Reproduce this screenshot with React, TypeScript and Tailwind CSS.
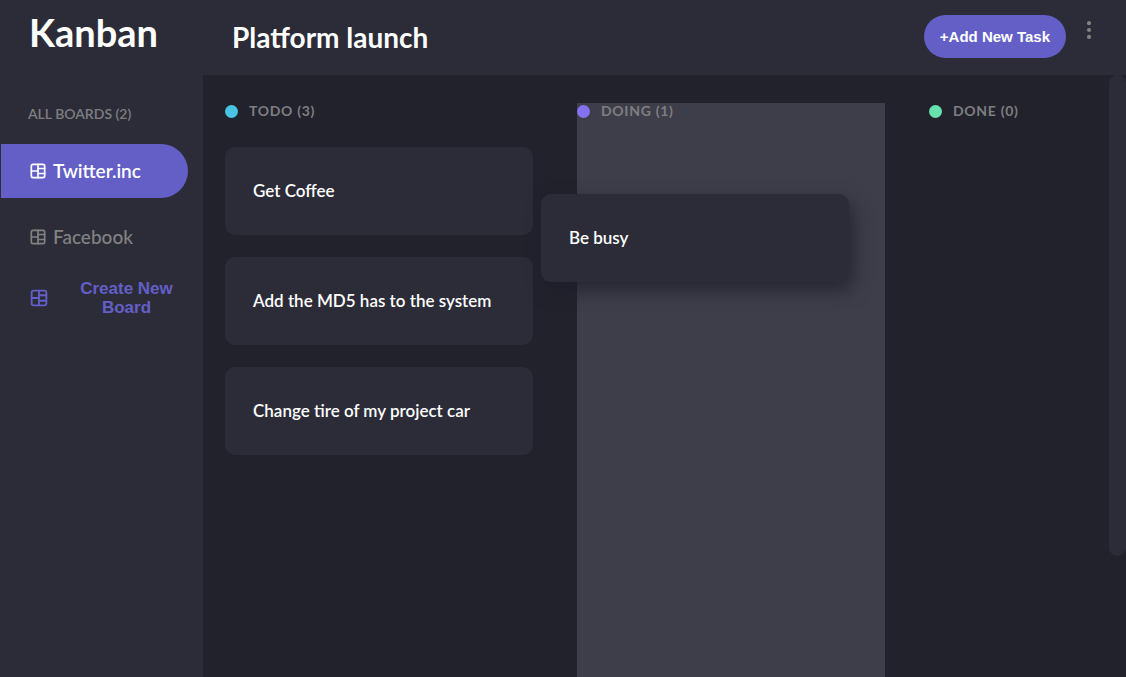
import { TbLayoutBoardSplit } from "react-icons/tb";
import { BsThreeDotsVertical } from "react-icons/bs";

const boards = [
  { name: "Twitter.inc", active: true },
  { name: "Facebook", active: false },
];

const columns = [
  {
    title: "TODO (3)",
    dot: "bg-[#49c4e5]",
    over: false,
    tasks: ["Get Coffee", "Add the MD5 has to the system", "Change tire of my project car"],
  },
  { title: "DOING (1)", dot: "bg-[#8471f2]", over: true, tasks: [] },
  { title: "DONE (0)", dot: "bg-[#67e2ae]", over: false, tasks: [] },
];

function Sidebar() {
  return (
    <aside className="flex w-[203px] shrink-0 flex-col border-l border-[#2d2e31] bg-[#2c2c38]">
      <div className="px-7 pt-2 text-[38px] leading-[48px] font-bold text-white">Kanban</div>
      <h2 className="mt-12 px-[27px] text-sm leading-5 font-semibold text-[#7e7e80]">ALL BOARDS (2)</h2>
      <nav className="mt-5 flex flex-col gap-3">
        {boards.map((board) => (
          <a
            key={board.name}
            href="#"
            className={
              board.active
                ? "mr-[15px] flex h-[54px] items-center gap-[5px] rounded-r-full bg-[#635fc7] pl-[27px] text-[19px] font-semibold text-white"
                : "mr-[15px] flex h-[54px] items-center gap-[5px] rounded-r-full pl-[27px] text-[19px] font-medium text-[#828282]"
            }
          >
            <TbLayoutBoardSplit className="size-5 shrink-0" />
            {board.name}
          </a>
        ))}
      </nav>
      <button
        type="button"
        className="mt-[15px] mr-[15px] flex items-center pl-[27px] font-['Liberation_Sans',sans-serif] text-[17px] leading-[19px] font-bold text-[#635fc7]"
      >
        <TbLayoutBoardSplit className="size-[22px] shrink-0" />
        <span className="ml-[15px] flex-1 text-center">Create New Board</span>
      </button>
    </aside>
  );
}

function TaskCard({ title }: { title: string }) {
  return (
    <article className="flex h-[88px] items-center rounded-[10px] bg-[#2c2c38] px-7 text-[17px] leading-6 font-semibold text-white">
      {title}
    </article>
  );
}

export default function App() {
  return (
    <div className="flex h-screen overflow-hidden bg-[#22222d] font-[Lato,sans-serif]">
      <Sidebar />
      <div className="flex min-w-0 flex-1 flex-col">
        <header className="flex h-[75px] shrink-0 items-start bg-[#2c2c38] pr-[26px] pl-[29px]">
          <h1 className="mt-[19px] flex-1 text-[28px] leading-9 font-bold text-white">Platform launch</h1>
          <button
            type="button"
            className="mt-[15px] flex h-[43px] items-center rounded-full bg-[#635fc7] px-4 font-['Liberation_Sans',sans-serif] text-[15px] leading-5 font-bold text-white"
          >
            +Add New Task
          </button>
          <button type="button" aria-label="Board options" className="mt-[19px] ml-3 text-[#828282]">
            <BsThreeDotsVertical className="size-[22px]" />
          </button>
        </header>
        <div className="flex min-h-0 flex-1">
          <main className="flex min-w-0 flex-1 gap-11 overflow-hidden pt-7 pl-[22px]">
            {columns.map((column) => (
              <section
                key={column.title}
                className={
                  column.over ? "relative w-[308px] shrink-0 bg-[#3e3e4a]" : "w-[308px] shrink-0"
                }
              >
                <h2 className="flex h-4 items-center gap-[11px] text-sm font-bold tracking-wider text-[#7e7e80]">
                  <span className={`size-[13px] rounded-full ${column.dot}`} />
                  {column.title}
                </h2>
                <div className="mt-7 flex flex-col gap-[22px]">
                  {column.tasks.map((task) => (
                    <TaskCard key={task} title={task} />
                  ))}
                </div>
                {column.over && (
                  <div className="absolute top-[91px] -left-9 w-full rounded-[10px] shadow-[4px_8px_18px_rgba(30,30,42,0.75)]">
                    <TaskCard title="Be busy" />
                  </div>
                )}
              </section>
            ))}
          </main>
          <div className="h-[481px] w-[17px] shrink-0 rounded-full bg-[#2c2c38]" />
        </div>
      </div>
    </div>
  );
}
